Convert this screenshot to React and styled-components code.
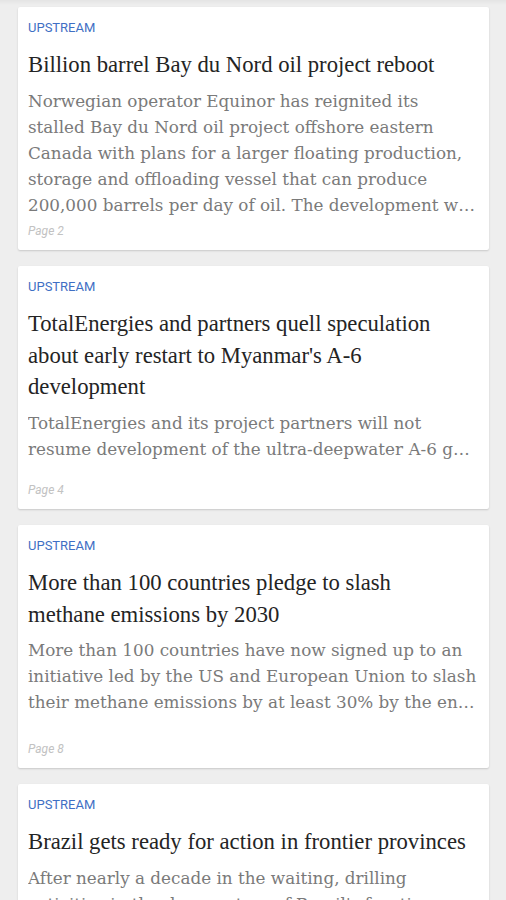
import React from 'react';
import styled, { createGlobalStyle } from 'styled-components';

const GlobalStyle = createGlobalStyle`
  html, body {
    margin: 0;
    padding: 0;
    background: #eeeeee;
  }
`;

const Feed = styled.main`
  display: flex;
  flex-direction: column;
  gap: 16px;
  padding: 7px 17px 16px 18px;
  background: linear-gradient(#e4e4e4, #eeeeee 5px);
  min-height: 900px;
  box-sizing: border-box;
`;

const Card = styled.article`
  display: flex;
  flex-direction: column;
  height: 243px;
  flex-shrink: 0;
  box-sizing: border-box;
  padding: 13px 10px 12px 10px;
  background: #ffffff;
  border-radius: 2px;
  box-shadow: 0 1px 2px rgba(0, 0, 0, 0.16);
`;

const Category = styled.div`
  font-family: Roboto, "Liberation Sans", sans-serif;
  font-size: 13px;
  line-height: 16px;
  color: #3f6fc4;
  text-transform: uppercase;
`;

const Title = styled.h2`
  margin: 13px 0 0;
  padding-right: 8px;
  font-family: "Liberation Serif", serif;
  font-weight: normal;
  font-size: 22.7px;
  line-height: 31.5px;
  color: #242424;
`;

const Summary = styled.p`
  margin: 7px 0 0;
  font-family: "DejaVu Serif", serif;
  font-size: 16.8px;
  line-height: 26px;
  color: #7a7a7a;
  display: -webkit-box;
  -webkit-box-orient: vertical;
  -webkit-line-clamp: ${(p) => p.$lines};
  overflow: hidden;
`;

const PageTag = styled.div`
  margin-top: auto;
  font-family: Roboto, "Liberation Sans", sans-serif;
  font-style: italic;
  font-size: 12px;
  line-height: 14px;
  color: #c2c2c2;
`;

const stories = [
  {
    title: 'Billion barrel Bay du Nord oil project reboot',
    summary:
      'Norwegian operator Equinor has reignited its stalled Bay du Nord oil project offshore eastern Canada with plans for a larger floating production, storage and offloading vessel that can produce 200,000 barrels per day of oil. The development will be Canada\u2019s first deepwater project.',
    lines: 5,
    page: 2,
  },
  {
    title: "TotalEnergies and partners quell speculation about early restart to Myanmar's A-6 development",
    summary:
      'TotalEnergies and its project partners will not resume development of the ultra-deepwater A-6 gas project in Myanmar for now.',
    lines: 2,
    page: 4,
  },
  {
    title: 'More than 100 countries pledge to slash methane emissions by 2030',
    summary:
      'More than 100 countries have now signed up to an initiative led by the US and European Union to slash their methane emissions by at least 30% by the end of the decade.',
    lines: 3,
    page: 8,
  },
  {
    title: 'Brazil gets ready for action in frontier provinces',
    summary:
      "After nearly a decade in the waiting, drilling activities in the deep waters of Brazil's frontier provinces are set to resume.",
    lines: 3,
    page: 10,
  },
];

export default function App() {
  return (
    <>
      <GlobalStyle />
      <Feed>
        {stories.map((s) => (
          <Card key={s.title}>
            <Category>Upstream</Category>
            <Title>{s.title}</Title>
            <Summary $lines={s.lines}>{s.summary}</Summary>
            <PageTag>Page {s.page}</PageTag>
          </Card>
        ))}
      </Feed>
    </>
  );
}
